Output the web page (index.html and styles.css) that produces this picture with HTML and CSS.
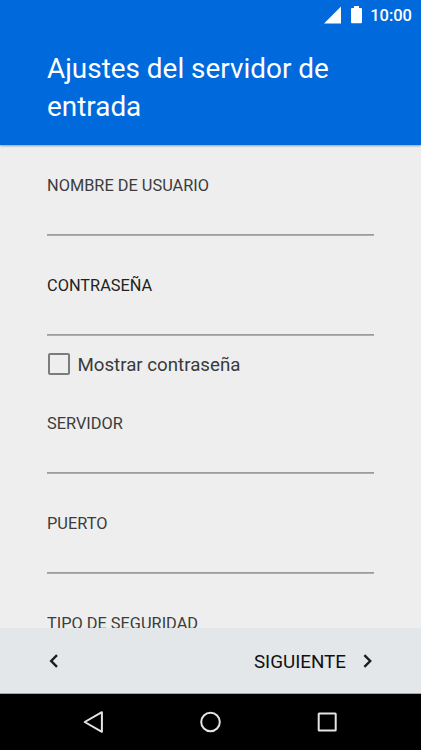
FILE: index.html
```html
<!DOCTYPE html>
<html lang="es">
<head>
<meta charset="utf-8">
<title>Ajustes del servidor de entrada</title>
<link rel="stylesheet" href="styles.css">
</head>
<body>
<div class="screen">
  <header class="header">
    <div class="status">
      <svg class="signal" width="17" height="18" viewBox="0 0 17 18"><path d="M0 17.5 17 0.5V17.5Z" fill="#fff"/></svg>
      <svg class="battery" width="11" height="18" viewBox="0 0 11 18"><path d="M3 0h5v2H10q1 0 1 1V16.2q0 1-1 1H1q-1 0-1-1V3q0-1 1-1H3Z" fill="#fff"/></svg>
      <span class="clock">10:00</span>
    </div>
    <h1 class="title">Ajustes del servidor de<br>entrada</h1>
  </header>
  <main class="form">
    <div class="field"><span class="label">NOMBRE DE USUARIO</span><div class="line"></div></div>
    <div class="field"><span class="label dark">CONTRASEÑA</span><div class="line"></div></div>
    <div class="check"><span class="box"></span><span class="check-text">Mostrar contraseña</span></div>
    <div class="field"><span class="label">SERVIDOR</span><div class="line"></div></div>
    <div class="field"><span class="label">PUERTO</span><div class="line"></div></div>
    <div class="field"><span class="label">TIPO DE SEGURIDAD</span><div class="line"></div></div>
  </main>
  <footer class="actions">
    <svg width="14" height="16" viewBox="0 0 14 16"><path d="M10 2.2 4.2 8l5.8 5.8" fill="none" stroke="#1b1c1c" stroke-width="2.4"/></svg>
    <div class="next">
      <span class="next-text">SIGUIENTE</span>
      <svg width="14" height="16" viewBox="0 0 14 16"><path d="M4.4 2.2 10.2 8l-5.8 5.8" fill="none" stroke="#1b1c1c" stroke-width="2.4"/></svg>
    </div>
  </footer>
  <nav class="nav">
    <svg width="24" height="24" viewBox="0 0 24 24"><path d="M20.9 2.2V21.8L3.7 12Z"/></svg>
    <svg width="24" height="24" viewBox="0 0 24 24"><circle cx="12.5" cy="12" r="9.3"/></svg>
    <svg width="24" height="24" viewBox="0 0 24 24"><rect x="3.7" y="3.5" width="17" height="17" rx="0.5"/></svg>
  </nav>
</div>
</body>
</html>
```

FILE: styles.css
```css
* { box-sizing: border-box; }
body { margin: 0; font-family: Roboto, sans-serif; background: #000; }
svg { display: block; flex: none; }
.screen {
  width: 421px;
  height: 750px;
  display: flex;
  flex-direction: column;
  overflow: hidden;
  background: #eee;
}
.header {
  height: 145px;
  flex: none;
  background: #0069dc;
  color: #fff;
  box-shadow: 0 1px 2px rgba(0, 0, 0, .35);
  z-index: 1;
}
.status {
  height: 30px;
  display: flex;
  align-items: center;
  justify-content: flex-end;
  padding-right: 9px;
}
.battery { margin: 0 8px 0 10px; }
.clock { font-size: 16.5px; font-weight: 500; line-height: 30px; padding-top: 1px; }
.title {
  margin: 20px 0 0 47px;
  font-size: 27.9px;
  font-weight: 400;
  line-height: 37.5px;
  white-space: nowrap;
}
.form {
  flex: 1;
  min-height: 0;
  overflow: hidden;
  padding: 31px 47px 0;
}
.field { height: 100px; }
.label {
  display: block;
  height: 58px;
  font-size: 16.35px;
  line-height: 20px;
  color: #3c3c3c;
  white-space: nowrap;
}
.label.dark { color: #222; }
.line { height: 2px; background: linear-gradient(#9c9c9c 50%, #adadad 50%); }
.check {
  height: 38px;
  margin-top: -31px;
  margin-bottom: 31px;
  display: flex;
  align-items: center;
  padding-left: 1px;
}
.box {
  width: 22px;
  height: 22px;
  border: 2px solid #7c7c7c;
  border-radius: 2px;
}
.check-text { margin-left: 7.5px; padding-top: 1px; font-size: 18.7px; color: #3a3a3a; white-space: nowrap; }
.actions {
  height: 66px;
  flex: none;
  display: flex;
  align-items: center;
  justify-content: space-between;
  padding: 0 47px;
  background: #e3e7ea;
  border-bottom: 1px solid #a5a8aa;
}
.next { display: flex; align-items: center; gap: 14px; }
.next-text { padding-top: 2px; font-size: 18.8px; color: #111; }
.nav {
  height: 56px;
  flex: none;
  display: flex;
  justify-content: space-between;
  align-items: center;
  padding: 0 82px 0 81px;
  background: #000;
}
.nav svg { fill: none; stroke: #e4e4e4; stroke-width: 2; stroke-linejoin: round; }
```
